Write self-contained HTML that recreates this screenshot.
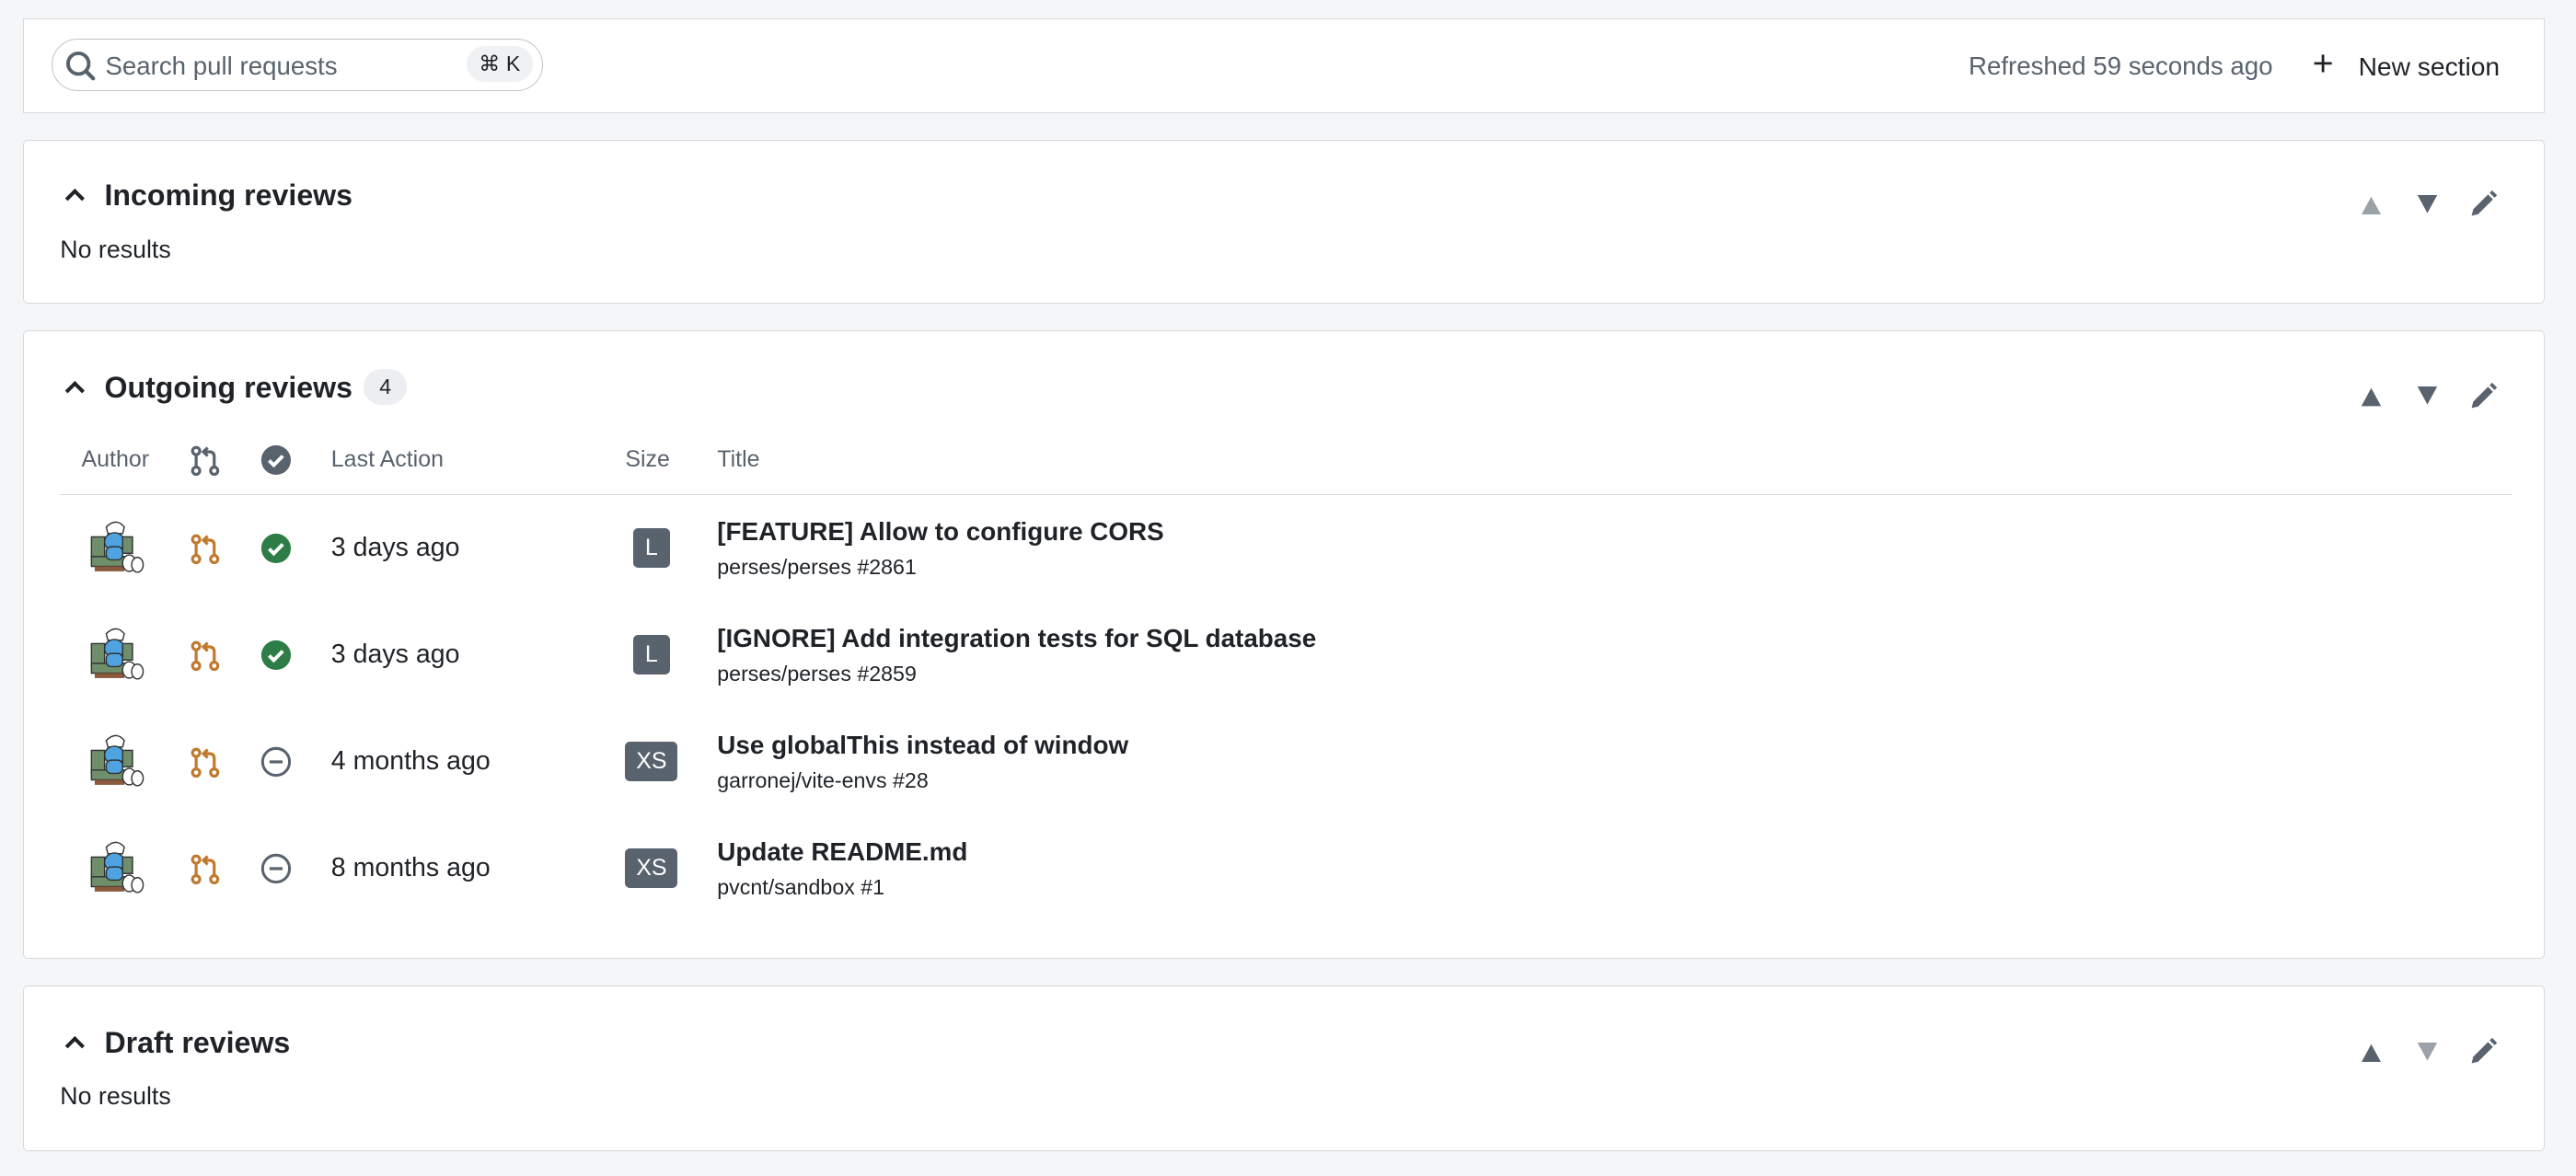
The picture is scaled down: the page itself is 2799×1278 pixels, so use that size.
<!DOCTYPE html>
<html><head><meta charset="utf-8"><style>
html,body{margin:0;padding:0;background:#f5f6f8;}
body{width:1568px;height:716px;zoom:1.78508;font-family:"Liberation Sans",sans-serif;color:#1f2328;position:relative;overflow:hidden}
.card{position:absolute;left:14px;width:1535px;background:#fff;border:1px solid #d6d9dd;border-radius:3px;box-sizing:border-box}
.abs{position:absolute;white-space:nowrap}
.h{font-size:18px;font-weight:bold}
.chev{position:absolute;width:6px;height:6px;border-left:2.4px solid #1f2328;border-top:2.4px solid #1f2328;transform:rotate(45deg)}
.nr{font-size:15px;color:#1f2328}
.th{font-size:14px;color:#59636e}
.row{position:absolute;left:0;width:100%;height:65px}
.sz{position:absolute;background:#59636e;color:#fff;font-size:14px;border-radius:3px;text-align:center;line-height:24px;height:24px}
.t{font-size:15.6px;font-weight:bold}
.sub{font-size:13px}
</style></head><body>
<div class="card" style="top:11px;height:58px;border-radius:0">
  <div class="abs" style="left:17px;top:12px;width:299px;height:32px;border:1px solid #bfc3c8;border-radius:17px;box-sizing:border-box">
    <svg class="abs" style="left:7px;top:6px" width="20" height="20" viewBox="0 0 20 20"><circle cx="8.5" cy="8.5" r="6.3" fill="none" stroke="#59636e" stroke-width="2.2"/><path d="M13 13l4.5 4.5" stroke="#59636e" stroke-width="2.4" stroke-linecap="round"/></svg>
    <span class="abs" style="left:32px;top:7px;font-size:15.5px;color:#59636e">Search pull requests</span>
    <span class="abs" style="left:252px;top:4px;width:40px;height:22px;background:#eff1f3;border-radius:11px;font-size:13px;text-align:center;line-height:22px;color:#1f2328">⌘ K</span>
  </div>
  <span class="abs" style="right:165px;top:20px;font-size:15.5px;color:#59636e">Refreshed 59 seconds ago</span>
  <span class="abs" style="left:1393px;top:15px;font-size:22px;color:#1f2328;font-weight:300">+</span>
  <span class="abs" style="left:1421px;top:20px;font-size:15.8px">New section</span>
</div>

<div class="card" style="top:85px;height:100px">
  <div class="chev" style="left:27px;top:31px"></div>
  <span class="abs h" style="left:49px;top:23px">Incoming reviews</span>
  <span class="abs nr" style="left:22px;top:58px">No results</span>
  <svg class="abs" style="left:1422px;top:33px" width="14" height="12"><path d="M7 1L13 12H1Z" fill="#9ba1a8"/></svg>
  <svg class="abs" style="left:1456px;top:33px" width="14" height="12"><path d="M1 0H13L7 11Z" fill="#59636e"/></svg>
  <svg class="abs" style="left:1488px;top:30px" width="18" height="18" viewBox="0 0 18 18"><path d="M2 16l1-4 9-9 3 3-9 9zM13 2l1.5-1.5 3 3L16 5z" fill="#59636e"/></svg>
</div>

<div class="card" style="top:201px;height:383px">
  <div class="chev" style="left:27px;top:32px"></div>
  <span class="abs h" style="left:49px;top:24px">Outgoing reviews</span>
  <span class="abs" style="left:207px;top:23px;width:26px;height:22px;background:#eceef1;border-radius:11px;font-size:13px;text-align:center;line-height:22px">4</span>
  <svg class="abs" style="left:1422px;top:34px" width="14" height="12"><path d="M7 1L13 12H1Z" fill="#59636e"/></svg>
  <svg class="abs" style="left:1456px;top:34px" width="14" height="12"><path d="M1 0H13L7 11Z" fill="#59636e"/></svg>
  <svg class="abs" style="left:1488px;top:31px" width="18" height="18" viewBox="0 0 18 18"><path d="M2 16l1-4 9-9 3 3-9 9zM13 2l1.5-1.5 3 3L16 5z" fill="#59636e"/></svg>
  <span class="abs th" style="left:35px;top:70px">Author</span>
  <svg class="abs" style="left:101px;top:69px" width="20" height="20" viewBox="0 0 20 20"><g fill="none" stroke="#59636e" stroke-width="1.8"><circle cx="4" cy="4" r="2.2"/><circle cx="4" cy="16" r="2.2"/><circle cx="15" cy="16" r="2.2"/><path d="M4 6.2v7.6M15 13.8V7.5q0-3-3-3H8.5M11 2l-2.6 2.5L11 7"/></g></svg>
  <svg class="abs" style="left:144px;top:69px" width="19" height="19"><circle cx="9.5" cy="9.5" r="9" fill="#59636e"/><path d="M5.3 9.8l2.8 2.8 5.5-5.6" fill="none" stroke="#fff" stroke-width="2.2"/></svg>
  <span class="abs th" style="left:187px;top:70px">Last Action</span>
  <span class="abs th" style="left:366px;top:70px">Size</span>
  <span class="abs th" style="left:422px;top:70px">Title</span>
  <div class="abs" style="left:22px;top:99px;width:1492px;height:1px;background:#d6d9dd"></div>

  <div id="rows"></div>
</div>

<div class="card" style="top:600px;height:101px">
  <div class="chev" style="left:27px;top:32px"></div>
  <span class="abs h" style="left:49px;top:24px">Draft reviews</span>
  <span class="abs nr" style="left:22px;top:58px">No results</span>
  <svg class="abs" style="left:1422px;top:34px" width="14" height="12"><path d="M7 1L13 12H1Z" fill="#59636e"/></svg>
  <svg class="abs" style="left:1456px;top:34px" width="14" height="12"><path d="M1 0H13L7 11Z" fill="#9ba1a8"/></svg>
  <svg class="abs" style="left:1488px;top:31px" width="18" height="18" viewBox="0 0 18 18"><path d="M2 16l1-4 9-9 3 3-9 9zM13 2l1.5-1.5 3 3L16 5z" fill="#59636e"/></svg>
</div>

<script>
var rows=[["3 days ago","L","[FEATURE] Allow to configure CORS","perses/perses #2861",1],
["3 days ago","L","[IGNORE] Add integration tests for SQL database","perses/perses #2859",1],
["4 months ago","XS","Use globalThis instead of window","garronej/vite-envs #28",0],
["8 months ago","XS","Update README.md","pvcnt/sandbox #1",0]];
var h="";
rows.forEach(function(r,i){
var top=100+i*65;
var av='<svg class="abs" style="left:38px;top:13px" width="36" height="36" viewBox="0 0 36 36"><rect x="3" y="12" width="8" height="14" fill="#6f8f6a" stroke="#333" stroke-width=".8"/><rect x="3" y="24" width="22" height="6" fill="#6f8f6a" stroke="#333" stroke-width=".8"/><rect x="5" y="30" width="18" height="3" fill="#8b5a3c"/><path d="M12 6q6-6 11 0l-1 4h-9z" fill="#fff" stroke="#333" stroke-width=".8"/><ellipse cx="17" cy="15" rx="6" ry="5.5" fill="#4fa3e0" stroke="#333" stroke-width=".8"/><rect x="12" y="18" width="10" height="8" rx="3" fill="#4fa3e0" stroke="#333" stroke-width=".8"/><ellipse cx="26" cy="28" rx="4" ry="5" fill="#fff" stroke="#333" stroke-width=".8"/><ellipse cx="31" cy="29" rx="3.5" ry="4.5" fill="#fff" stroke="#333" stroke-width=".8"/><rect x="22" y="12" width="6" height="10" fill="#6f8f6a" stroke="#333" stroke-width=".8"/></svg>';
var pr='<svg class="abs" style="left:101px;top:23px" width="20" height="20" viewBox="0 0 20 20"><g fill="none" stroke="#c07a30" stroke-width="1.8"><circle cx="4" cy="4" r="2.2"/><circle cx="4" cy="16" r="2.2"/><circle cx="15" cy="16" r="2.2"/><path d="M4 6.2v7.6M15 13.8V7.5q0-3-3-3H8.5M11 2l-2.6 2.5L11 7"/></g></svg>';
var st=r[4]?'<svg class="abs" style="left:144px;top:23px" width="19" height="19"><circle cx="9.5" cy="9.5" r="9" fill="#2e7d46"/><path d="M5.3 9.8l2.8 2.8 5.5-5.6" fill="none" stroke="#fff" stroke-width="2.2"/></svg>':'<svg class="abs" style="left:144px;top:23px" width="19" height="19"><circle cx="9.5" cy="9.5" r="8.2" fill="none" stroke="#59636e" stroke-width="1.7"/><path d="M5.5 9.5h8" stroke="#59636e" stroke-width="1.8"/></svg>';
var w=r[1]=="L"?22:32;
h+='<div class="row" style="top:'+top+'px">'+av+pr+st+
'<span class="abs" style="left:187px;top:23px;font-size:16px">'+r[0]+'</span>'+
'<div class="sz" style="left:'+(382-w/2)+'px;top:20px;width:'+w+'px">'+r[1]+'</div>'+
'<span class="abs t" style="left:422px;top:13px">'+r[2]+'</span>'+
'<span class="abs sub" style="left:422px;top:36px">'+r[3]+'</span></div>';
});
document.getElementById("rows").innerHTML=h;
</script>
</body></html>
